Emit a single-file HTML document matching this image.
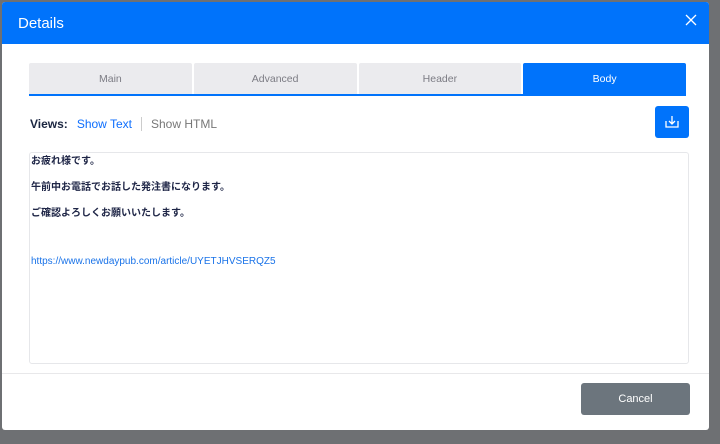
<!DOCTYPE html>
<html><head><meta charset="utf-8"><style>
*{box-sizing:border-box;margin:0;padding:0}
body{width:720px;height:444px;background:#6e7073;font-family:"Liberation Sans","Noto Sans CJK JP",sans-serif;position:relative;overflow:hidden}
.modal{position:absolute;left:2px;top:2px;width:707px;height:428px;background:#fff;border-radius:3px;overflow:hidden}
.hd{height:42px;background:#0073fb;color:#fff;font-size:15px;padding:13px 0 0 16px}
.x{position:absolute;right:12px;top:12px}
.tabs{position:absolute;left:27px;top:61px;width:657px;height:33px;display:flex;gap:2px;border-bottom:2px solid #0073fb}
.tab{flex:1;background:#ebebee;color:#7c7c84;font-size:10.5px;text-align:center;line-height:33px;border-radius:2px 2px 0 0}
.tab.on{background:#0073fb;color:#fff}
.views{position:absolute;left:28px;top:115px;font-size:12px;display:flex;align-items:center}
.views b{color:#1a2540;margin-right:9px}
.views .a{color:#0d6efd;padding-right:9px;border-right:1px solid #ccc}
.views .c{color:#777;padding-left:9px}
.dl{position:absolute;left:653px;top:104px;width:34px;height:32px;background:#0073fb;border-radius:3px}
.box{position:absolute;left:27px;top:150px;width:660px;height:212px;border:1px solid #e6e7ea;border-radius:3px;padding:2px 0 0 1px;font-size:10px;font-weight:bold;color:#1e2546;line-height:13px}
.box p{margin-bottom:13px}
.box .l{color:#1a73e8;font-weight:normal;margin-top:35px}
.ft{position:absolute;left:0;top:371px;width:100%;border-top:1px solid #e8e8ea}
.cancel{position:absolute;left:579px;top:381px;width:109px;height:32px;background:#6c757d;border-radius:3px;color:#fff;font-size:11px;text-align:center;line-height:32px}
</style></head><body>
<div class="modal">
<div class="hd">Details</div>
<svg class="x" width="12" height="12" viewBox="0 0 12 12"><path d="M1 1l10 10M11 1L1 11" stroke="#fff" stroke-width="1.3"/></svg>
<div class="tabs"><div class="tab">Main</div><div class="tab">Advanced</div><div class="tab">Header</div><div class="tab on">Body</div></div>
<div class="views"><b>Views:</b><span class="a">Show Text</span><span class="c">Show HTML</span></div>
<div class="dl"><svg width="34" height="32" viewBox="0 0 34 32"><path d="M11 15v6h12v-6" fill="none" stroke="#fff" stroke-width="1.3"/><path d="M17 10v8M14 15l3 3 3-3" fill="none" stroke="#fff" stroke-width="1.3"/></svg></div>
<div class="box">
<p>お疲れ様です。</p>
<p>午前中お電話でお話した発注書になります。</p>
<p>ご確認よろしくお願いいたします。</p>
<p class="l">https://www.newdaypub.com/article/UYETJHVSERQZ5</p>
</div>
<div class="ft"></div>
<div class="cancel">Cancel</div>
</div>
</body></html>
